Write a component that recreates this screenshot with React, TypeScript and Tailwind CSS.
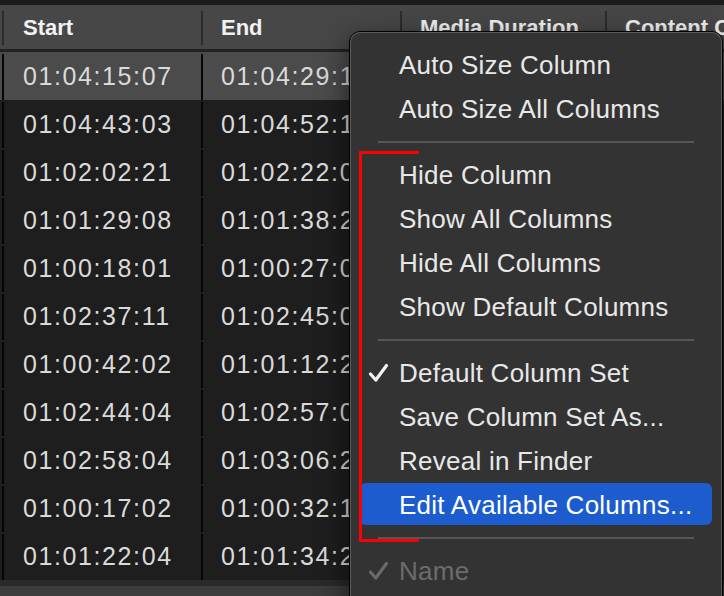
import type { ReactNode } from 'react';

const rows = [
  ['01:04:15:07', '01:04:29:13', '00:00:14:06'],
  ['01:04:43:03', '01:04:52:17', '00:00:09:14'],
  ['01:02:02:21', '01:02:22:05', '00:00:19:08'],
  ['01:01:29:08', '01:01:38:22', '00:00:09:14'],
  ['01:00:18:01', '01:00:27:09', '00:00:09:08'],
  ['01:02:37:11', '01:02:45:02', '00:00:07:15'],
  ['01:00:42:02', '01:01:12:20', '00:00:30:18'],
  ['01:02:44:04', '01:02:57:05', '00:00:13:01'],
  ['01:02:58:04', '01:03:06:20', '00:00:08:16'],
  ['01:00:17:02', '01:00:32:11', '00:00:15:09'],
  ['01:01:22:04', '01:01:34:21', '00:00:12:17'],
];

const font = "font-['Liberation_Sans',Arial,sans-serif]";

function Check({ muted }: { muted?: boolean }) {
  return (
    <svg
      width="21"
      height="20"
      viewBox="0 0 21 20"
      className="absolute left-[18px] top-[12px]"
      fill="none"
      stroke={muted ? '#6a6a6a' : '#f2f2f2'}
      strokeWidth="3.2"
      strokeLinecap="round"
      strokeLinejoin="round"
    >
      <path d="M2.5 11 L7.8 17 L18.5 2.5" />
    </svg>
  );
}

function Item({
  children,
  checked,
  active,
  disabled,
}: {
  children: ReactNode;
  checked?: boolean;
  active?: boolean;
  disabled?: boolean;
}) {
  return (
    <div className="relative h-[44px] px-[10px]">
      <div
        className={`flex h-[42px] items-center rounded-[6px] pl-[39px] pt-[2px] text-[26px] tracking-[0.25px] ${
          active ? 'bg-[#1c5ccf] text-white' : disabled ? 'text-[#6c6c6c]' : 'text-[#e8e8e8]'
        }`}
      >
        {children}
      </div>
      {checked || disabled ? <Check muted={disabled} /> : null}
    </div>
  );
}

function Separator() {
  return (
    <div className="flex h-[22px] items-center px-[28px]">
      <div className="h-[2px] w-full bg-[#565656]" />
    </div>
  );
}

export default function App() {
  return (
    <div className={`relative h-[596px] w-[724px] overflow-hidden bg-[#1e1e1e] ${font}`}>
      <div className="h-[5px] bg-[#1b1b1b]" />
      <div className="flex h-[44px] items-center overflow-hidden whitespace-nowrap bg-[#474747] pt-[1px] text-[22px] font-bold text-[#f2f2f2]">
        <div className="h-[34px] w-[4px] shrink-0 border-r-2 border-[#2c2c2c]" />
        <div className="w-[197px] shrink-0 pl-[19px]">Start</div>
        <div className="h-[34px] w-[2px] shrink-0 bg-[#2c2c2c]" />
        <div className="w-[197px] shrink-0 pl-[18px]">End</div>
        <div className="h-[34px] w-[2px] shrink-0 bg-[#2c2c2c]" />
        <div className="w-[203px] shrink-0 pl-[18px]">Media Duration</div>
        <div className="h-[34px] w-[2px] shrink-0 bg-[#2c2c2c]" />
        <div className="shrink-0 pl-[18px]">Content Created</div>
      </div>
      <div className="h-[3px] bg-[#222222]" />

      <div>
        {rows.map((r, i) => (
          <div
            key={i}
            className={`flex h-[48px] items-stretch whitespace-nowrap pt-[2px] text-[25px] tracking-[1.6px] text-[#dadada] ${
              i === 0 ? 'bg-[#4b4b4b]' : 'bg-[#1e1e1e]'
            }`}
          >
            <div className="w-[2px] shrink-0" />
            <div className="flex w-[199px] shrink-0 items-center border-l-2 border-[#050505] pl-[19px]">{r[0]}</div>
            <div className="flex w-[199px] shrink-0 items-center border-l-2 border-[#050505] pl-[18px]">{r[1]}</div>
            <div className="flex w-[205px] shrink-0 items-center border-l-2 border-[#050505] pl-[18px]">{r[2]}</div>
            <div className="flex flex-1 items-center border-l-2 border-[#050505] pl-[18px]">2019</div>
          </div>
        ))}
      </div>
      <div className="h-[6px] bg-[#2a2a2a]" />
      <div className="h-[20px] bg-[#3c3c3c]" />

      <div className="absolute left-[349px] top-[31px] h-[600px] w-[374px] rounded-[11px] border border-black bg-[#333333] shadow-[0_10px_30px_rgba(0,0,0,0.6)]">
        <div className="h-full rounded-[10px] pt-[11px] ring-1 ring-inset ring-[#5c5c5c]">
          <Item>Auto Size Column</Item>
          <Item>Auto Size All Columns</Item>
          <Separator />
          <Item>Hide Column</Item>
          <Item>Show All Columns</Item>
          <Item>Hide All Columns</Item>
          <Item>Show Default Columns</Item>
          <Separator />
          <Item checked>Default Column Set</Item>
          <Item>Save Column Set As...</Item>
          <Item>Reveal in Finder</Item>
          <Item active>Edit Available Columns...</Item>
          <Separator />
          <Item disabled>Name</Item>
        </div>
      </div>

      <div className="absolute left-[359px] top-[151px] h-[391px] w-[60px] border-y-[3px] border-l-[3px] border-[#ff0000]" />
    </div>
  );
}
